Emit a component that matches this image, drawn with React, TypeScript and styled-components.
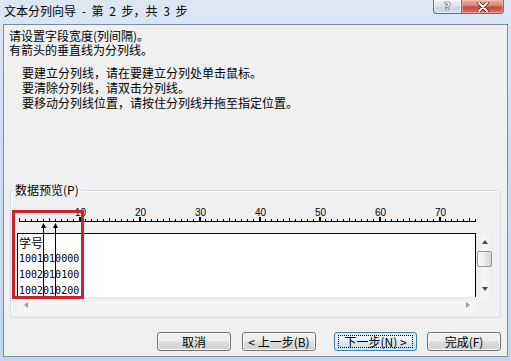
import React from 'react';
import styled, { createGlobalStyle, css } from 'styled-components';

const GlobalStyle = createGlobalStyle`
  html, body {
    margin: 0;
    padding: 0;
  }
  body {
    background: #cfdcec;
    font-family: "Noto Sans CJK SC", "Noto Sans", sans-serif;
  }
`;

const CJK = `"Noto Sans CJK SC", "Noto Sans", sans-serif`;

// ruler geometry: one character = 6px
const CHAR_W = 6;
const ORIGIN = 2;
const RULER_LEN = 76;
const columnBreaks = [4, 6];

const rows = [
  { text: '学号', cjk: true },
  { text: '1001010000' },
  { text: '1002010100' },
  { text: '1002010200' },
];

const Window = styled.div`
  width: 511px;
  height: 361px;
  box-sizing: border-box;
  display: flex;
  flex-direction: column;
  padding: 0 3px 4px 3px;
  overflow: hidden;
  background: linear-gradient(to bottom, #dde7f4 0%, #cfdced 45%, #c5d6eb 100%);
`;

const TitleBar = styled.div`
  height: 24px;
  display: flex;
  align-items: flex-start;
`;

const Title = styled.div`
  margin: 5px 0 0 1px;
  font-size: 12px;
  line-height: 12px;
  word-spacing: 3px;
  color: #000;
  font-family: ${CJK};
`;

const CaptionButtons = styled.div`
  display: flex;
  margin: 0 4px 0 auto;
`;

const CaptionButton = styled.div<{ $close?: boolean }>`
  width: ${(p) => (p.$close ? 42 : 29)}px;
  height: 14px;
  box-sizing: border-box;
  display: flex;
  align-items: center;
  justify-content: center;
  border: 1px solid #5f6f84;
  border-top: none;
  border-radius: 0 0 0 4px;
  background: linear-gradient(to bottom, #eef3f9 0%, #d9e3ef 50%, #c3d2e3 52%, #d3dfec 100%);
  box-shadow: inset 0 0 0 1px rgba(255, 255, 255, 0.6);
  ${(p) =>
    p.$close &&
    css`
      border-left: none;
      border-radius: 0 0 4px 0;
      background: linear-gradient(to bottom, #eab0a4 0%, #d98273 45%, #c4483b 52%, #d4735f 100%);
      box-shadow: inset 0 0 0 1px rgba(255, 210, 200, 0.5);
    `}
`;

const HelpGlyph = styled.span`
  font: bold 11px/11px "DejaVu Sans", sans-serif;
  color: #f4f7fb;
  text-shadow: 0 0 1px #1f2d40, 0 0 1px #1f2d40, 0 0 1px #1f2d40;
`;

const Client = styled.div`
  flex: 1;
  display: flex;
  flex-direction: column;
  background: #f0f0f0;
  border: 1px solid #7c8ca0;
  font-family: ${CJK};
  font-size: 12px;
  color: #000;
`;

const Intro = styled.div`
  padding: 4px 0 0 5px;
`;

const IntroLine = styled.p`
  margin: 0;
  line-height: 14px;
`;

const Hints = styled.div`
  margin: 8px 0 0 18px;
`;

const HintLine = styled.p`
  margin: 0;
  line-height: 15px;
`;

const Group = styled.fieldset`
  margin: 74px 6px 0 6px;
  padding: 10px 6px 4px 6px;
  min-width: 0;
  border: 1px solid #d3dce3;
  border-radius: 3px;
  box-shadow: inset 1px 1px 0 #fbfbfb;
`;

const GroupLabel = styled.legend`
  margin-left: -4px;
  padding: 0 2px;
  font-size: 12px;
  line-height: 12px;
`;

const PreviewArea = styled.div`
  position: relative;
  width: 477px;
`;

const RulerSvg = styled.svg`
  display: block;
`;

const PaneRow = styled.div`
  display: flex;
  height: 64px;
`;

const DataPane = styled.div`
  width: 459px;
  box-sizing: border-box;
  background: #fff;
  border: 1px solid #000;
  border-bottom: none;
  padding: 1px 0 0 1px;
  overflow: hidden;
`;

const DataRow = styled.div<{ $cjk?: boolean }>`
  height: 16px;
  line-height: 16px;
  white-space: pre;
  font-family: ${(p) => (p.$cjk ? CJK : `"DejaVu Sans Mono", monospace`)};
  font-size: ${(p) => (p.$cjk ? 12 : 10)}px;
`;

const VScroll = styled.div`
  width: 17px;
  display: flex;
  flex-direction: column;
  align-items: center;
  background: linear-gradient(to right, #ececec, #f7f7f7 50%, #ededed);
`;

const ArrowBox = styled.div<{ $wide?: boolean }>`
  width: 17px;
  height: ${(p) => (p.$wide ? 16 : 17)}px;
  display: flex;
  align-items: center;
  justify-content: center;
`;

const Arrow = styled.div<{ $dir: 'up' | 'down' | 'left' | 'right'; $dim?: boolean }>`
  width: 0;
  height: 0;
  ${(p) => {
    const c = p.$dim ? '#9a9a9a' : '#4a4a4a';
    switch (p.$dir) {
      case 'up':
        return css`border-left: 3px solid transparent; border-right: 3px solid transparent; border-bottom: 4px solid ${c};`;
      case 'down':
        return css`border-left: 3px solid transparent; border-right: 3px solid transparent; border-top: 4px solid ${c};`;
      case 'left':
        return css`border-top: 3px solid transparent; border-bottom: 3px solid transparent; border-right: 4px solid ${c};`;
      default:
        return css`border-top: 3px solid transparent; border-bottom: 3px solid transparent; border-left: 4px solid ${c};`;
    }
  }}
`;

const Thumb = styled.div`
  width: 15px;
  height: 16px;
  margin-top: 1px;
  box-sizing: border-box;
  border: 1px solid #959595;
  border-radius: 2px;
  background: linear-gradient(to right, #fbfbfb 0%, #eeeeee 45%, #d4d4d4 100%);
`;

const Spacer = styled.div`
  flex: 1;
`;

const HScroll = styled.div`
  width: 459px;
  height: 16px;
  display: flex;
  justify-content: space-between;
  background: linear-gradient(to bottom, #eaeaea, #f6f6f6 40%, #f3f3f3);
`;

const BreakOverlay = styled.svg`
  position: absolute;
  top: 0;
  left: 0;
  pointer-events: none;
`;

const Annotation = styled.div`
  position: absolute;
  left: -5px;
  top: 4px;
  width: 72px;
  height: 89px;
  box-sizing: border-box;
  border: 3px solid #cc2229;
  pointer-events: none;
`;

const ButtonRow = styled.div`
  display: flex;
  margin: 14px 0 0 153px;
`;

const Button = styled.button<{ $width: number; $gap?: number; $default?: boolean }>`
  width: ${(p) => p.$width}px;
  height: 19px;
  margin-left: ${(p) => p.$gap ?? 0}px;
  padding: 0;
  box-sizing: border-box;
  display: flex;
  align-items: center;
  justify-content: center;
  font-family: ${CJK};
  font-size: 12px;
  line-height: 12px;
  color: #000;
  border: 1px solid #707070;
  border-radius: 3px;
  background: linear-gradient(to bottom, #f2f2f2 0%, #ebebeb 48%, #dddddd 52%, #cfcfcf 100%);
  box-shadow: inset 0 0 0 1px #fbfbfb;
  ${(p) =>
    p.$default &&
    css`
      border-color: #3c7fb1;
      box-shadow: inset 0 0 0 1px #d8eefa;
      background: linear-gradient(to bottom, #f1f7fb 0%, #e8f1f7 48%, #dbe8f1 52%, #cfdfea 100%);
    `}
`;

const FocusRect = styled.span`
  display: flex;
  align-items: center;
  justify-content: center;
  width: calc(100% - 6px);
  height: 13px;
  box-sizing: border-box;
  border: 1px dotted #000;
`;

const Ruler = () => {
  const marks: React.ReactNode[] = [];
  for (let i = 0; i <= RULER_LEN; i++) {
    const x = ORIGIN + i * CHAR_W;
    const major = i % 10 === 0 && i > 0;
    const mid = i % 5 === 0;
    const h = major ? 4 : mid ? 3 : 2;
    marks.push(<rect key={`t${i}`} x={x} y={15 - h} width={major ? 2 : 1} height={h} fill="#000" />);
    if (major) {
      marks.push(
        <text
          key={`n${i}`}
          x={x + 1.5}
          y={10}
          textAnchor="middle"
          fontSize={10}
          fontFamily='"Liberation Sans", sans-serif'
          fill="#000"
        >
          {i}
        </text>
      );
    }
  }
  return (
    <RulerSvg width={477} height={27}>
      {marks}
      <rect x={ORIGIN} y={15} width={RULER_LEN * CHAR_W + 1} height={1} fill="#000" />
    </RulerSvg>
  );
};

const App = () => {
  return (
    <>
      <GlobalStyle />
      <Window>
        <TitleBar>
          <Title>文本分列向导 - 第 2 步，共 3 步</Title>
          <CaptionButtons>
            <CaptionButton>
              <HelpGlyph>?</HelpGlyph>
            </CaptionButton>
            <CaptionButton $close>
              <svg width="12" height="10" viewBox="0 0 12 10">
                <path d="M2 1 L10 9 M10 1 L2 9" stroke="#5a1d17" strokeWidth="3.4" strokeLinecap="round" />
                <path d="M2 1 L10 9 M10 1 L2 9" stroke="#fff" strokeWidth="1.8" strokeLinecap="round" />
              </svg>
            </CaptionButton>
          </CaptionButtons>
        </TitleBar>

        <Client>
          <Intro>
            <IntroLine>请设置字段宽度(列间隔)。</IntroLine>
            <IntroLine>有箭头的垂直线为分列线。</IntroLine>
          </Intro>
          <Hints>
            <HintLine>要建立分列线，请在要建立分列处单击鼠标。</HintLine>
            <HintLine>要清除分列线，请双击分列线。</HintLine>
            <HintLine>要移动分列线位置，请按住分列线并拖至指定位置。</HintLine>
          </Hints>

          <Group>
            <GroupLabel>数据预览(P)</GroupLabel>
            <PreviewArea>
              <Ruler />
              <PaneRow>
                <DataPane>
                  {rows.map((r) => (
                    <DataRow key={r.text} $cjk={r.cjk}>
                      {r.text}
                    </DataRow>
                  ))}
                </DataPane>
                <VScroll>
                  <ArrowBox>
                    <Arrow $dir="up" />
                  </ArrowBox>
                  <Thumb />
                  <Spacer />
                  <ArrowBox>
                    <Arrow $dir="down" />
                  </ArrowBox>
                </VScroll>
              </PaneRow>
              <HScroll>
                <ArrowBox $wide>
                  <Arrow $dir="left" $dim />
                </ArrowBox>
                <ArrowBox $wide>
                  <Arrow $dir="right" $dim />
                </ArrowBox>
              </HScroll>

              <BreakOverlay width={477} height={91}>
                {columnBreaks.map((c) => {
                  const x = ORIGIN + c * CHAR_W + 0.5;
                  return (
                    <g key={c}>
                      <polygon points={`${x},17 ${x - 2.5},22 ${x + 2.5},22`} fill="#000" />
                      <line x1={x} y1={21} x2={x} y2={91} stroke="#000" strokeWidth={1} />
                    </g>
                  );
                })}
              </BreakOverlay>
              <Annotation />
            </PreviewArea>
          </Group>

          <ButtonRow>
            <Button $width={74}>取消</Button>
            <Button $width={74} $gap={11}>
              &lt; 上一步(B)
            </Button>
            <Button $width={83} $gap={18} $default>
              <FocusRect>下一步(N) &gt;</FocusRect>
            </Button>
            <Button $width={74} $gap={10}>
              完成(F)
            </Button>
          </ButtonRow>
        </Client>
      </Window>
    </>
  );
};

export default App;
